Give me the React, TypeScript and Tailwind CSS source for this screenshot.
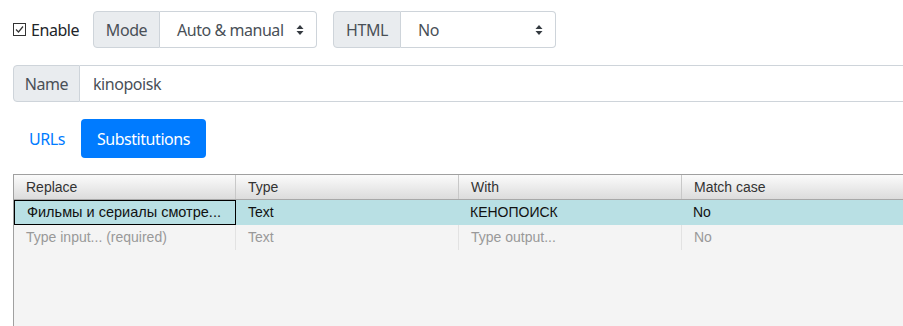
import { useState } from 'react';

const ui = { fontFamily: '"Noto Sans", "Open Sans", sans-serif', letterSpacing: '-0.45px' };
const grid = { fontFamily: '"Liberation Sans", Arial, sans-serif', letterSpacing: '0' };

const Caret = () => (
    <svg width="8" height="12" viewBox="0 0 8 12" className="shrink-0">
        <path d="M4 1 L7.5 5 H0.5 Z" fill="#343a40" />
        <path d="M4 11 L7.5 7 H0.5 Z" fill="#343a40" />
    </svg>
);

const SelectGroup = ({ label, value, labelW, selectW }: { label: string, value: string, labelW: string, selectW: string }) => (
    <div className="flex h-[37px]">
        <div className={`${labelW} flex items-center justify-center bg-[#e9ecef] border border-[#ced4da] rounded-l text-[#495057]`}>{label}</div>
        <div className={`${selectW} flex items-center justify-between pl-[17px] pr-[12px] border border-l-0 border-[#ced4da] rounded-r bg-white text-[#495057]`}>
            <span>{value}</span>
            <Caret />
        </div>
    </div>
);

const cols = ['Replace', 'Type', 'With', 'Match case'];
const colW = ['w-[221px]', 'w-[223px]', 'w-[223px]', 'w-[223px]'];

export default function App() {
    const [tab, setTab] = useState('subs');
    return (
        <div className="w-[903px] h-[326px] overflow-hidden bg-white text-[16px] text-[#212529]" style={ui}>
            <div className="flex items-center pt-[11px] pl-[13px]">
                <label className="flex items-center gap-[5px] w-[80px]">
                    <svg width="13" height="13" viewBox="0 0 13 13">
                        <rect x="0.5" y="0.5" width="12" height="12" fill="white" stroke="#333" />
                        <path d="M3 6.5 L5.5 9 L10 3.5" fill="none" stroke="#333" strokeWidth="1.2" />
                    </svg>
                    <span>Enable</span>
                </label>
                <SelectGroup label="Mode" value="Auto & manual" labelW="w-[67px]" selectW="w-[157px]" />
                <div className="w-[16px]" />
                <SelectGroup label="HTML" value="No" labelW="w-[68px]" selectW="w-[155px]" />
            </div>
            <div className="flex h-[37px] mt-[17px] ml-[13px] w-[920px]">
                <div className="w-[67px] flex items-center justify-center bg-[#e9ecef] border border-[#ced4da] rounded-l text-[#495057]">Name</div>
                <div className="flex-1 flex items-center pl-[13px] border border-l-0 border-[#ced4da] text-[#495057]">kinopoisk</div>
            </div>
            <div className="flex mt-[17px] ml-[13px] h-[39px]">
                <button onClick={() => setTab('urls')} className={`px-[16px] rounded ${tab === 'urls' ? 'bg-[#007bff] text-white' : 'text-[#007bff]'}`}>URLs</button>
                <button onClick={() => setTab('subs')} className={`px-[16px] rounded ${tab === 'subs' ? 'bg-[#007bff] text-white' : 'text-[#007bff]'}`}>Substitutions</button>
            </div>
            <div className="mt-[16px] ml-[13px] w-[920px] h-[160px] border-t border-l border-[#a0a0a0] bg-[#f4f4f4] text-[14px]" style={grid}>
                <div className="flex h-[25px] bg-gradient-to-b from-[#fbfbfb] to-[#dcdcdc] border-b border-[#a8a8a8]">
                    {cols.map((c, i) => (
                        <div key={c} className={`${colW[i]} flex items-center pl-[12px] text-[#333] ${i > 0 ? 'border-l border-[#c8c8c8]' : ''}`}>{c}</div>
                    ))}
                </div>
                <div className="flex h-[25px] bg-[#b9e0e4] text-[#111]">
                    <div className="w-[222px] flex items-center pl-[12px] border border-black text-[14.5px]">Фильмы и сериалы смотре...</div>
                    <div className="w-[222px] flex items-center pl-[12px]">Text</div>
                    <div className="w-[223px] flex items-center pl-[12px]">КЕНОПОИСК</div>
                    <div className="w-[223px] flex items-center pl-[12px]">No</div>
                </div>
                <div className="flex h-[25px] text-[#999]">
                    {['Type input... (required)', 'Text', 'Type output...', 'No'].map((t, i) => (
                        <div key={i} className={`${i === 0 ? 'w-[222px]' : 'w-[223px]'} flex items-center pl-[12px] ${i < 3 ? 'border-r border-[#e2e2e2]' : ''}`}>{t}</div>
                    ))}
                </div>
            </div>
        </div>
    );
}
